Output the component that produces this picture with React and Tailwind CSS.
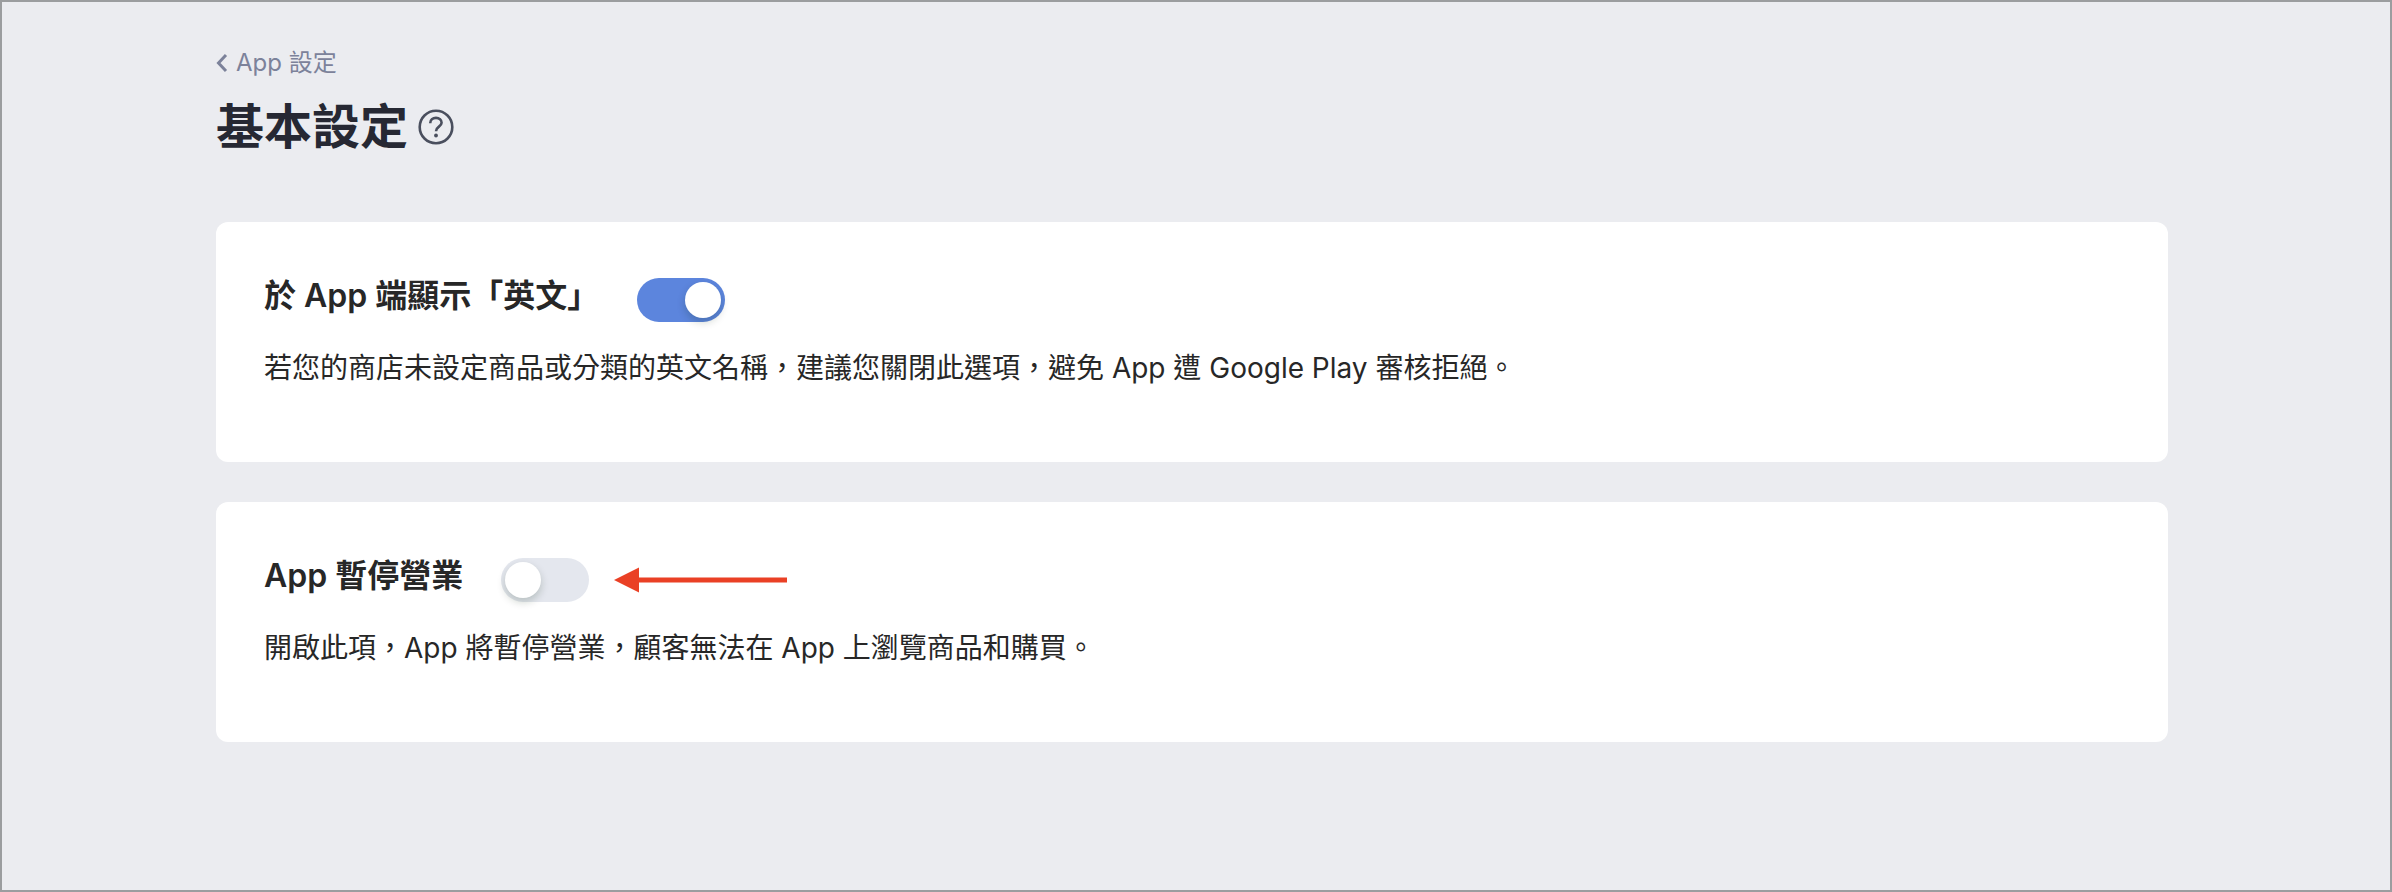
import React, { useState } from 'react';

function Switch({ id, checked, onChange }) {
    return (
        <span className="relative inline-flex shrink-0">
            <input
                id={id}
                type="checkbox"
                role="switch"
                checked={checked}
                onChange={(e) => onChange(e.target.checked)}
                className="peer h-11 w-22 cursor-pointer appearance-none rounded-full bg-[#e4e7ee] checked:bg-[#5c85dd]"
            />
            {/* 滑塊 */}
            <span className="pointer-events-none absolute top-1 left-1 size-9 rounded-full bg-white shadow-[0_4px_8px_rgba(0,35,11,0.2)] peer-checked:left-12"></span>
        </span>
    );
}

function SettingCard({ id, title, description, checked, onChange, children }) {
    return (
        <section className="rounded-xl bg-white px-12 pt-12 pb-[70px]">
            <div className="flex items-end">
                <h2 className="mr-[38px] text-[32px] leading-[52px] font-semibold">
                    <label htmlFor={id}>{title}</label>
                </h2>
                <Switch id={id} checked={checked} onChange={onChange} />
                {children}
            </div>
            <p className="mt-[22px] text-[28px] leading-12">{description}</p>
        </section>
    );
}

function App() {
    const [showEnglish, setShowEnglish] = useState(true);
    const [paused, setPaused] = useState(false);

    return (
        <div
            lang="zh-Hant"
            className="min-h-screen border-2 border-[#9b9d9f] bg-[#ebecf0] pt-[41px] pb-20 font-[Inter,'Noto_Sans_CJK_TC',sans-serif] text-[#272727]"
        >
            <main className="mr-[222px] ml-[214px]">
                {/* 返回連結 */}
                <a href="#" className="flex h-10 w-fit items-center gap-2 text-2xl leading-10 text-[#7c829a]">
                    <svg className="h-5 w-3" viewBox="0 0 12 20" fill="none" stroke="currentColor" strokeWidth="3">
                        <path d="M10 2 L2.500 10 L10 18" />
                    </svg>
                    App 設定
                </a>

                {/* 頁面標題 */}
                <div className="mt-2 mb-[59px] flex h-[72px] items-center gap-2.5">
                    <h1 className="text-5xl leading-[72px] font-bold text-[#262833]">基本設定</h1>
                    <button type="button" aria-label="說明" className="cursor-pointer text-[#4a4f5e]">
                        <svg className="size-9" viewBox="0 0 36 36" fill="none" stroke="currentColor" strokeWidth="2.600">
                            <circle cx="18" cy="18" r="16.300" />
                            <path d="M12.200 14.200 C12.200 10.800 14.800 8.900 18 8.900 C21.200 8.900 23.600 11 23.600 13.800 C23.600 17.700 18 17.700 18 22.200" />
                            <circle cx="18" cy="26.500" r="1.900" fill="currentColor" stroke="none" />
                        </svg>
                    </button>
                </div>

                <div className="flex flex-col gap-10">
                    <SettingCard
                        id="show-english"
                        title="於 App 端顯示「英文」"
                        description="若您的商店未設定商品或分類的英文名稱，建議您關閉此選項，避免 App 遭 Google Play 審核拒絕。"
                        checked={showEnglish}
                        onChange={setShowEnglish}
                    />
                    <SettingCard
                        id="pause-app"
                        title="App 暫停營業"
                        description="開啟此項，App 將暫停營業，顧客無法在 App 上瀏覽商品和購買。"
                        checked={paused}
                        onChange={setPaused}
                    >
                        {/* 紅色箭頭 */}
                        <svg className="ml-6 h-11 w-44" viewBox="0 0 176 44" fill="#ea4025">
                            <path d="M1 22 L26 9.500 V34.500 Z" />
                            <path d="M24 19.500 H174 V24.500 H24 Z" />
                        </svg>
                    </SettingCard>
                </div>
            </main>
        </div>
    );
}

export default App;
